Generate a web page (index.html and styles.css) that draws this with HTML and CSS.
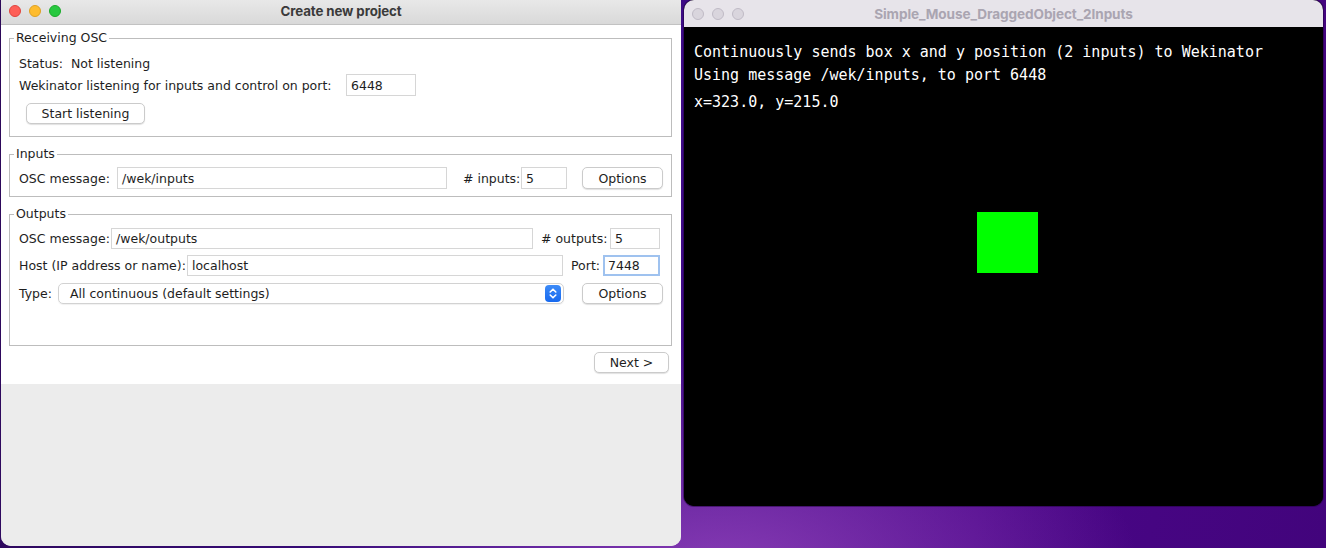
FILE: index.html
```html
<!DOCTYPE html>
<html>
<head>
<meta charset="utf-8">
<link rel="stylesheet" href="styles.css">
</head>
<body>
<div class="desktop">
  <div class="win win-left">
    <div class="titlebar">
      <div class="lights">
        <span class="light red"></span><span class="light yellow"></span><span class="light green"></span>
      </div>
      <div class="title">Create new project</div>
      <div></div>
    </div>
    <div class="content">
      <fieldset class="group g-recv">
        <legend>Receiving OSC</legend>
        <div class="row"><span class="lbl">Status:&nbsp; Not listening</span></div>
        <div class="row"><span class="lbl w-listen">Wekinator listening for inputs and control on port:</span><span class="field w-port-in">6448</span></div>
        <div class="row row-btn"><button class="btn b-start">Start listening</button></div>
      </fieldset>
      <fieldset class="group g-in">
        <legend>Inputs</legend>
        <div class="row">
          <span class="lbl w-osc-in">OSC message:</span><span class="field w-msg-in">/wek/inputs</span>
          <span class="lbl w-ninputs"># inputs:</span><span class="field w-num-in">5</span>
          <button class="btn b-opt">Options</button>
        </div>
      </fieldset>
      <fieldset class="group g-out">
        <legend>Outputs</legend>
        <div class="row">
          <span class="lbl w-osc-out">OSC message:</span><span class="field w-msg-out">/wek/outputs</span>
          <span class="lbl w-noutputs"># outputs:</span><span class="field w-num-out">5</span>
        </div>
        <div class="row row-host">
          <span class="lbl w-host">Host (IP address or name):</span><span class="field w-host-f">localhost</span>
          <span class="lbl w-portlbl">Port:</span><span class="field focused w-port-out">7448</span>
        </div>
        <div class="row row-type">
          <span class="lbl w-type">Type:</span>
          <span class="combo"><span class="combo-text">All continuous (default settings)</span>
            <span class="stepper"><svg width="10" height="13" viewBox="0 0 10 13"><path d="M2.2 5 L5 2.2 L7.8 5" fill="none" stroke="#fff" stroke-width="1.6" stroke-linecap="round" stroke-linejoin="round"/><path d="M2.2 8 L5 10.8 L7.8 8" fill="none" stroke="#fff" stroke-width="1.6" stroke-linecap="round" stroke-linejoin="round"/></svg></span>
          </span>
          <button class="btn b-opt">Options</button>
        </div>
      </fieldset>
      <div class="nav-row"><button class="btn b-next">Next &gt;</button></div>
    </div>
    <div class="footer"></div>
  </div>

  <div class="win win-right">
    <div class="titlebar-r">
      <div class="lights lights-r">
        <span class="light gray"></span><span class="light gray"></span><span class="light gray"></span>
      </div>
      <div class="title-r">Simple_Mouse_DraggedObject_2Inputs</div>
      <div></div>
    </div>
    <div class="canvas">
      <div class="line">Continuously sends box x and y position (2 inputs) to Wekinator</div>
      <div class="line">Using message /wek/inputs, to port 6448</div>
      <div class="line line-pos">x=323.0, y=215.0</div>
      <div class="box"></div>
    </div>
  </div>
</div>
</body>
</html>
```
FILE: styles.css
```css
* { box-sizing: border-box; }
html, body { margin: 0; padding: 0; }
body {
  width: 1326px;
  height: 548px;
  overflow: hidden;
  background:
    radial-gradient(ellipse 420px 240px at 720px 580px, rgba(150, 70, 190, 0.85), rgba(150, 70, 190, 0) 100%),
    linear-gradient(100deg, #2c0858 0%, #3c0c86 45%, #4a0688 75%, #42047c 100%);
}
.desktop {
  display: flex;
  align-items: flex-start;
  gap: 3px;
  padding-left: 1px;
  height: 548px;
}

/* ---------- left window ---------- */
.win-left {
  width: 680px;
  height: 546px;
  border-radius: 0 0 10px 10px;
  overflow: hidden;
  display: flex;
  flex-direction: column;
  background: #ececec;
  font-family: "DejaVu Sans", "Noto Sans", sans-serif;
  font-size: 12.5px;
  color: #1e1e1e;
}
.titlebar {
  height: 25px;
  flex: none;
  display: grid;
  grid-template-columns: 1fr auto 1fr;
  align-items: center;
  background: linear-gradient(#e8e8e8, #d9d9d9);
  border-bottom: 1px solid #c2c2c2;
  padding-bottom: 2px;
}
.lights { display: flex; gap: 8px; padding-left: 8px; }
.light { width: 12px; height: 12px; border-radius: 50%; display: block; }
.red { background: #fe5f57; border: 0.5px solid #e0443e; }
.yellow { background: #febc2e; border: 0.5px solid #dea123; }
.green { background: #28c840; border: 0.5px solid #1aab29; }
.title {
  font-family: Inter, "DejaVu Sans", sans-serif;
  font-weight: 700;
  font-size: 13.3px;
  color: #3a3a3a;
  letter-spacing: -0.1px;
}

.content {
  background: #fff;
  padding: 5px 9px 11px 8px;
  display: flex;
  flex-direction: column;
}
.group {
  margin: 0 0 9px 0;
  border: 1px solid #bdbdbd;
  padding: 0 8px 0 9px;
  min-width: 0;
}
.group legend {
  padding: 0 2px;
  margin-left: -5px;
  line-height: 16px;
  font-size: 12.5px;
}
.g-recv { padding-top: 6px; padding-bottom: 12px; }
.g-in { padding-top: 5px; padding-bottom: 7px; }
.g-out { padding-top: 5px; padding-bottom: 41px; margin-bottom: 6px; }

.row { display: flex; align-items: center; height: 22px; }
.row-btn { margin-top: 6px; }
.row-host { margin-top: 5px; }
.row-type { margin-top: 6px; }
.lbl { white-space: nowrap; flex: none; }

.field {
  flex: none;
  height: 22px;
  border: 1px solid #d6d6d6;
  background: #fff;
  padding-left: 4px;
  display: flex;
  align-items: center;
  white-space: nowrap;
}
.g-out .field { height: 21px; }
.field.focused {
  border: 2px solid #9fc2ef;
  padding-left: 3px;
}

.w-listen { width: 327px; }
.w-port-in { width: 70px; }

.w-osc-in { width: 98px; }
.w-msg-in { width: 330px; }
.w-ninputs { width: 58px; margin-left: 16px; }
.w-num-in { width: 46px; }

.w-osc-out { width: 92px; }
.w-msg-out { width: 422px; }
.w-noutputs { width: 69px; margin-left: 8px; }
.w-num-out { width: 50px; }
.w-host { width: 168px; }
.w-host-f { width: 376px; }
.w-portlbl { width: 32px; margin-left: 8px; }
.w-port-out { width: 57px; }
.w-type { width: 39px; }

.btn {
  font-family: inherit;
  font-size: 12.5px;
  color: #1e1e1e;
  background: #fff;
  border: 1px solid #cbcbcb;
  border-radius: 5px;
  box-shadow: 0 1px 1px rgba(0, 0, 0, 0.12);
  height: 22px;
  padding: 0;
  flex: none;
  display: flex;
  align-items: center;
  justify-content: center;
}
.b-start { width: 119px; margin-left: 7px; height: 21px; }
.b-opt { width: 81px; margin-left: 15px; }
.row-type .b-opt { margin-left: 18px; height: 21px; }
.b-next { width: 75px; height: 21px; }

.combo {
  flex: none;
  width: 506px;
  height: 21px;
  border: 1px solid #d2d2d2;
  border-radius: 5px;
  box-shadow: 0 1px 1px rgba(0, 0, 0, 0.06);
  display: flex;
  align-items: center;
  justify-content: space-between;
  padding: 0 2px 0 11px;
}
.stepper {
  width: 16px;
  height: 17px;
  border-radius: 4px;
  background: linear-gradient(#3d8bf7, #1769ef);
  display: flex;
  align-items: center;
  justify-content: center;
}

.nav-row { display: flex; justify-content: flex-end; padding-right: 3px; }
.footer { flex: 1; background: #ececec; }

/* ---------- right window ---------- */
.win-right {
  width: 639px;
  height: 506px;
  border-radius: 10px;
  overflow: hidden;
  display: flex;
  flex-direction: column;
  background: #000;
  box-shadow: 0 0 0 1px rgba(30, 0, 60, 0.5);
}
.titlebar-r {
  height: 27px;
  flex: none;
  display: grid;
  grid-template-columns: 1fr auto 1fr;
  align-items: center;
  background: #e7e4ea;
}
.lights-r { padding-left: 8px; }
.gray { background: #d9d5dd; border: 1px solid #bfbac5; }
.title-r {
  font-family: Inter, "DejaVu Sans", sans-serif;
  font-weight: 700;
  font-size: 13.6px;
  color: #aaa5b1;
  letter-spacing: -0.1px;
}
.canvas {
  position: relative;
  flex: 1;
  background: #000;
  padding: 14px 0 0 10px;
  font-family: "DejaVu Sans Mono", "Liberation Mono", monospace;
  font-size: 15px;
  color: #fff;
}
.line { line-height: 23px; white-space: pre; }
.line-pos { margin-top: 4px; }
.box {
  position: absolute;
  left: 293px;
  top: 185px;
  width: 61px;
  height: 61px;
  background: #00ff00;
}
```
